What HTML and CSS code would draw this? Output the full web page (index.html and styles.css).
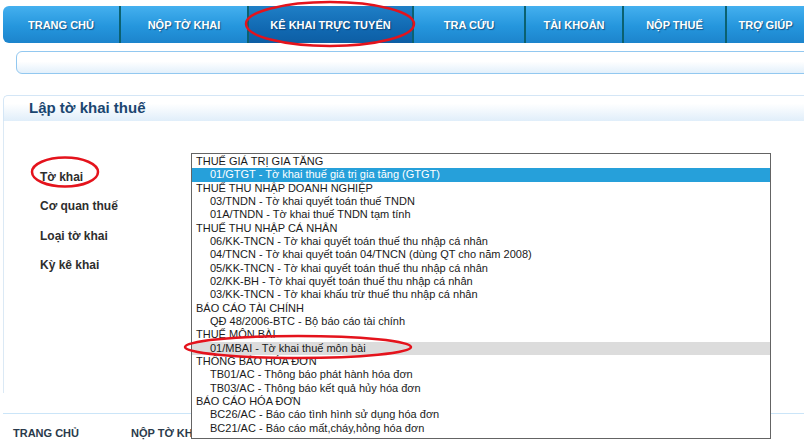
FILE: index.html
```html
<!DOCTYPE html>
<html lang="vi">
<head>
  <meta charset="UTF-8">
  <meta name="viewport" content="width=device-width, initial-scale=1.0">
  <title>Lập tờ khai thuế</title>
  <link rel="stylesheet" href="styles.css">
</head>
<body>

<div class="top-nav">
  <a href="#">TRANG CHỦ</a>
  <a href="#">NỘP TỜ KHAI</a>
  <a href="#" class="active">KÊ KHAI TRỰC TUYẾN</a>
  <a href="#">TRA CỨU</a>
  <a href="#">TÀI KHOẢN</a>
  <a href="#">NỘP THUẾ</a>
  <a href="#">TRỢ GIÚP</a>
</div>

<div class="sub-bar"></div>

<div class="panel">
  <div class="panel-head">Lập tờ khai thuế</div>
  <div class="panel-body">
    <div class="form-row">
      <label>Tờ khai</label>
      <div class="field">
        <div class="listbox">
          <div class="group">THUẾ GIÁ TRỊ GIA TĂNG</div>
          <div class="opt selected">01/GTGT - Tờ khai thuế giá trị gia tăng (GTGT)</div>
          <div class="group">THUẾ THU NHẬP DOANH NGHIỆP</div>
          <div class="opt">03/TNDN - Tờ khai quyết toán thuế TNDN</div>
          <div class="opt">01A/TNDN - Tờ khai thuế TNDN tạm tính</div>
          <div class="group">THUẾ THU NHẬP CÁ NHÂN</div>
          <div class="opt">06/KK-TNCN - Tờ khai quyết toán thuế thu nhập cá nhân</div>
          <div class="opt">04/TNCN - Tờ khai quyết toán 04/TNCN (dùng QT cho năm 2008)</div>
          <div class="opt">05/KK-TNCN - Tờ khai quyết toán thuế thu nhập cá nhân</div>
          <div class="opt">02/KK-BH - Tờ khai quyết toán thuế thu nhập cá nhân</div>
          <div class="opt">03/KK-TNCN - Tờ khai khấu trừ thuế thu nhập cá nhân</div>
          <div class="group">BÁO CÁO TÀI CHÍNH</div>
          <div class="opt">QĐ 48/2006-BTC - Bộ báo cáo tài chính</div>
          <div class="group">THUẾ MÔN BÀI</div>
          <div class="opt hover">01/MBAI - Tờ khai thuế môn bài</div>
          <div class="group">THÔNG BÁO HÓA ĐƠN</div>
          <div class="opt">TB01/AC - Thông báo phát hành hóa đơn</div>
          <div class="opt">TB03/AC - Thông báo kết quả hủy hóa đơn</div>
          <div class="group">BÁO CÁO HÓA ĐƠN</div>
          <div class="opt">BC26/AC - Báo cáo tình hình sử dụng hóa đơn</div>
          <div class="opt">BC21/AC - Báo cáo mất,cháy,hỏng hóa đơn</div>
        </div>
      </div>
    </div>
    <div class="form-row"><label>Cơ quan thuế</label></div>
    <div class="form-row"><label>Loại tờ khai</label></div>
    <div class="form-row"><label>Kỳ kê khai</label></div>
  </div>
</div>

<div class="footer">
  <a href="#">TRANG CHỦ</a>
  <a href="#">NỘP TỜ KHAI</a>
</div>

<!-- red marks drawn over the screenshot -->
<svg class="marks" width="804" height="445" viewBox="0 0 804 445">
  <ellipse cx="330" cy="24" rx="84" ry="22" />
  <ellipse cx="65" cy="172" rx="33" ry="14.5" />
  <ellipse cx="298" cy="347" rx="113" ry="11" />
</svg>

</body>
</html>
```

FILE: styles.css
```css
body {
  margin: 0;
  font-family: "Liberation Sans", Arial, sans-serif;
  background: #fff;
  overflow: hidden;
  position: relative;
  height: 445px;
}
.top-nav {
  display: flex;
  height: 37px;
  margin: 6px 0 0 3px;
  border-radius: 6px 0 0 6px;
  overflow: hidden;
  background: linear-gradient(#44b0ef, #2596dd 55%, #1c84cc);
}
.top-nav a {
  box-sizing: border-box;
  display: flex;
  align-items: center;
  justify-content: center;
  color: white;
  text-decoration: none;
  font-size: 11px;
  font-weight: bold;
  text-shadow: 1px 1px 1px rgba(0, 40, 80, 0.6);
  border-right: 2px solid #0b6170;
}
.top-nav a:nth-child(1) { width: 118px; }
.top-nav a:nth-child(2) { width: 128px; }
.top-nav a:nth-child(3) { width: 165px; }
.top-nav a:nth-child(4) { width: 112px; }
.top-nav a:nth-child(5) { width: 98px; }
.top-nav a:nth-child(6) { width: 103px; }
.top-nav a:nth-child(7) { flex: 1; border-right: none; }
.top-nav a.active {
  background: linear-gradient(#1f7fc6, #1169b2 60%, #0d5ea4);
}
.sub-bar {
  height: 21px;
  margin: 8px -10px 0 16px;
  border: 1px solid #92c8f0;
  border-radius: 6px 0 0 6px;
  background: linear-gradient(#ffffff 45%, #e3f0fb);
}
.panel {
  margin: 21px 0 0 3px;
}
.panel-head {
  height: 25px;
  line-height: 24px;
  padding-left: 25px;
  border-top: 1px solid #d4e6f6;
  border-left: 1px solid #d4e6f6;
  border-radius: 5px 0 0 0;
  background: linear-gradient(#ffffff 30%, #e0eefa);
  color: #1b4670;
  font-size: 15px;
  font-weight: bold;
}
.panel-body {
  height: 231px;
  padding: 41px 0 0 36px;
  border-left: 1px solid #dbe9f5;
}
.form-row {
  display: flex;
  height: 29.5px;
  align-items: center;
}
.form-row label {
  width: 151px;
  font-size: 12px;
  font-weight: bold;
  color: #2e2e2e;
}
.field {
  position: relative;
  align-self: stretch;
}
.listbox {
  position: absolute;
  top: -9px;
  left: 0;
  width: 578px;
  height: 283px;
  padding-top: 1px;
  border: 1px solid #646464;
  background: #fff;
  font-size: 11px;
  color: #1a1a1a;
  z-index: 2;
}
.listbox .group,
.listbox .opt {
  height: 13.33px;
  line-height: 13.33px;
  white-space: nowrap;
}
.listbox .group {
  padding-left: 4px;
}
.listbox .opt {
  padding-left: 18px;
}
.listbox .selected {
  background: #26a0da;
  color: white;
}
.listbox .hover {
  background: #dcdcdc;
}
.footer {
  display: flex;
  gap: 52px;
  margin: 20px 0 0 3px;
  padding: 13px 0 0 10px;
  border-top: 1px solid #cbe5f8;
}
.footer a {
  color: #2a3a4b;
  text-decoration: none;
  font-size: 11px;
  font-weight: bold;
}
.marks {
  position: absolute;
  top: 0;
  left: 0;
  pointer-events: none;
  z-index: 5;
}
.marks ellipse {
  fill: none;
  stroke: #e4131c;
  stroke-width: 2.5;
}
```
